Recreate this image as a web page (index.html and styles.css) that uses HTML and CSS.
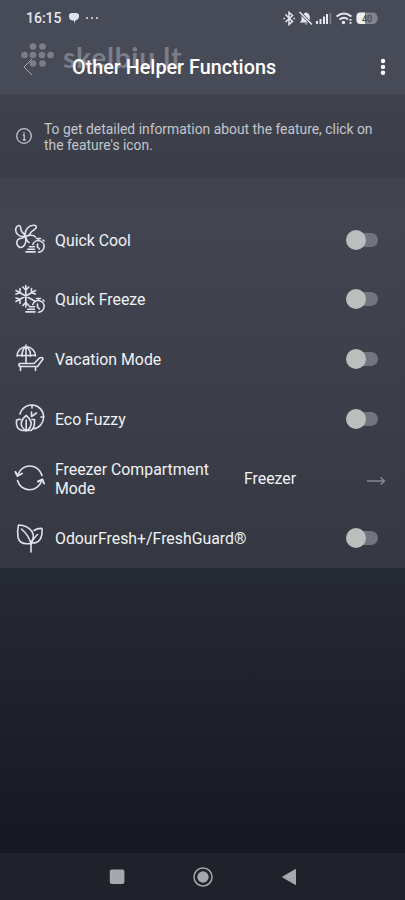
FILE: index.html
```
<!DOCTYPE html>
<html lang="en">
<head>
<meta charset="utf-8">
<meta name="viewport" content="width=device-width, initial-scale=1">
<title>Other Helper Functions</title>
<link rel="stylesheet" href="styles.css">
</head>
<body>
<svg class="defs" aria-hidden="true">
  <symbol id="timer" viewBox="0 0 32 32">
    <path d="M18.800 20.500A5.800 5.800 0 1 1 24.500 28.200M22.500 14.500h4M24.500 14.500v2M29 16l1 1M23.500 20v3l2 2M15.500 22.800h5M13.800 25.300h6.700M12 27.900h9"/>
  </symbol>
</svg>
<div class="screen">
  <header class="header">
    <div class="status">
      <span class="time">16:15</span>
      <svg class="chat" viewBox="0 0 12 12"><path d="M3.500 1h5A3 3 0 0 1 11 4.500C11 7 9 8 7.500 8.200L6 11.500V8.500H4C1.500 7.500 1 6 1 4.500A3 3 0 0 1 3.500 1z"/></svg>
      <span class="dots"><i></i><i></i><i></i></span>
      <div class="indicators">
        <svg width="98" height="16" viewBox="282 9 98 16">
          <g fill="none" stroke="#e5e8ed" stroke-width="1.500">
            <path d="M285.500 13.500l7 7-3.500 3V11.500l3.500 3-7 6.500M283.500 17.500h1.500M293.500 17.500h1.500"/>
            <path d="M299.500 11l12.500 12.500" stroke-width="1.500"/>
          </g>
          <g fill="#e5e8ed">
            <path d="M301.500 15l6.500 6.500H299.500l2-2zM303.500 13q1-1 1.800-1.200a.8.8 0 0 1 1.500 0q3 1 3 4.500v3zM304.500 22.500h3q-1.500 2-3 0z"/>
            <path d="M316 20h2v3h-2zM319.500 18h2v5h-2zM323 15.500h2v7.500h-2zM326 13h2v10h-2z"/>
            <path d="M329.500 12h1.800v11h-1.800z" opacity=".3"/>
            <circle cx="343.500" cy="21.500" r="1.700"/>
            <path d="M349.500 18h2v1.700h-2zM349.500 21h2v1.700h-2z"/>
          </g>
          <path d="M336.500 15.500q7.500-6 15 0M339.500 18.500q4.500-3.500 8.500 0" fill="none" stroke="#e5e8ed" stroke-width="1.900"/>
          <rect x="356.500" y="11.500" width="20.500" height="11.500" rx="4" fill="#80848d"/>
          <path d="M360.500 11.500H365V23H360.500a4 4 0 0 1-4-4V15.500a4 4 0 0 1 4-4z" fill="#eceeef"/>
          <path d="M377.500 15q2 2.200 0 4.500z" fill="#80848d"/>
          <text x="362" y="20.500" class="battery">40</text>
        </svg>
      </div>
    </div>
    <div class="watermark">
      <svg width="34" height="26" viewBox="20 42 34 26"><circle cx="33" cy="46.500" r="3.300"/><circle cx="42.500" cy="46.500" r="3.300"/><circle cx="24.500" cy="55" r="3.300"/><circle cx="33" cy="55" r="3.300"/><circle cx="42" cy="55" r="3.300"/><circle cx="50.500" cy="55" r="3.300"/><circle cx="33" cy="63.500" r="3.300"/><circle cx="42.500" cy="63.500" r="3.300"/></svg>
      <span>skelbiu.lt</span>
    </div>
    <div class="titlebar">
      <svg class="back" viewBox="0 0 10 18"><path d="M9 1L1 9l8 8"/></svg>
      <h1>Other Helper Functions</h1>
      <svg class="more" viewBox="0 0 6 18"><circle cx="3" cy="3" r="2.200"/><circle cx="3" cy="8.900" r="2.200"/><circle cx="3" cy="14.800" r="2.200"/></svg>
    </div>
  </header>
  <section class="info">
    <svg viewBox="0 0 18 18"><circle cx="9" cy="9" r="7.300"/><path d="M7.800 8h1.400v5M7.800 13h3M9 5v1.500"/></svg>
    <p>To get detailed information about the feature, click on<br>the feature's icon.</p>
  </section>
  <main class="list">
    <div class="row">
      <svg class="icon" viewBox="0 0 32 32"><path d="M11 12.500C10.500 5 15 1 20.500 1.300Q23.500 2 21.500 4.500C19.500 7 18 6.500 16.500 9 15 12 13 12.500 11 12.500zM11 12.500C5 13.500 .5 9 2 4Q4 .3 6 2C7.500 4 6 6 8 8 10 9.500 11 10.500 11 12.500zM11 12.500C9 15 6 13.500 4 15.500 1.500 18 3 22.500 6 23.500 10 24 13.500 18 11 12.500zM11 12.500C14.500 11 19.500 10.500 21.500 13M11 12.500C13 14.500 12.500 17.500 15 18.500"/><use href="#timer"/></svg>
      <span class="label">Quick Cool</span><span class="toggle"></span>
    </div>
    <div class="row">
      <svg class="icon" viewBox="0 0 32 32"><path d="M11.800 1.500v21.500M2 6.500l19.500 11M21.500 6.500L2 17.500M8.800 3l3 3 3-3M8.800 21.500l3-3 3 3M6 4.500v4.300L2 10M17.500 4.500v4.300l4 1.200M2 14l4 1.200v4.300"/><use href="#timer"/></svg>
      <span class="label">Quick Freeze</span><span class="toggle"></span>
    </div>
    <div class="row">
      <svg class="icon" viewBox="0 0 32 32"><path d="M3 12A9 9 0 0 1 21.500 12Q19 10.500 16.500 12 12 10.500 8 12 5.500 10.500 3 12zM12 1v18M8 12q0-7 4-9.500Q16.500 5 16.500 12M5.500 19.500H20l5.500-5.500q3-1.500 3.500 1L23.500 22.500H6q-2-1-.5-3zM6.500 23v3.500M21.500 23v3.500"/></svg>
      <span class="label">Vacation Mode</span><span class="toggle"></span>
    </div>
    <div class="row">
      <svg class="icon" viewBox="0 0 32 32"><path d="M6 11A12 12 0 1 1 19.500 25.800M18 2v3M30 14h-3M17.500 9v4.500l5-3.500M12.200 28Q6.500 24 7.300 19.500 8.500 15 12.200 12.500q4 3 5 7Q17.500 25 12.200 28zM12.200 17v11M6.500 16.500q-2.500-.5-4 .7Q1.500 26 8 27.500h4M18 16.500h2.500Q21 25 17 27.500h-4"/></svg>
      <span class="label">Eco Fuzzy</span><span class="toggle"></span>
    </div>
    <div class="row">
      <svg class="icon" viewBox="0 0 32 32"><path d="M4 11.500A12.500 12.500 0 0 1 28 12.500M27.500 18A12.500 12.500 0 0 1 3.500 17.500"/><path d="M1.500 9l2 4L8 10.500M24 18.500l4.500-2 1.500 4" stroke-width="2"/></svg>
      <span class="label mode">Freezer Compartment<br>Mode</span>
      <span class="value">Freezer</span>
      <svg class="arrow" viewBox="0 0 20 12"><path d="M1 6h17M14.500 2.500L18.500 6l-4 3.500"/></svg>
    </div>
    <div class="row">
      <svg class="icon" viewBox="0 0 32 32"><path d="M16 20.500Q6 22 4 14.500 3 8 4.500 2 14 2.500 18 8.500q3.500 6-2 12zM7.500 6q8 7 9.500 15.500V29M20 7.500q4-2.500 8-2Q28.500 12.500 26 16.500 23 20.500 17.500 20M17 22q1.500-6 6.500-10.500"/></svg>
      <span class="label">OdourFresh+/FreshGuard®</span><span class="toggle"></span>
    </div>
  </main>
  <nav class="nav">
    <svg viewBox="0 0 20 20"><rect x="2.800" y="2.500" width="14.600" height="14.500" rx="2"/></svg>
    <svg viewBox="0 0 20 20"><circle class="ring" cx="10" cy="10" r="9"/><circle cx="10" cy="10" r="5.700"/></svg>
    <svg viewBox="0 0 20 20"><path d="M3.500 10L16.500 2.500v15z" stroke="#a5a8ac" stroke-linejoin="round"/></svg>
  </nav>
</div>
</body>
</html>
```
FILE: styles.css
```
* { box-sizing: border-box; }
body { margin: 0; background: #151820; color: #f0f2f5; font-family: Roboto, sans-serif; }
.defs { position: absolute; width: 0; height: 0; }
.screen { width: 405px; height: 900px; display: flex; flex-direction: column; background: linear-gradient(#454955 0, #40434e 178px, #41444f 210px, #262a32 568px, #151820 853px); }
.header { position: relative; height: 94px; background: #474b57; }
.status { height: 36px; display: flex; align-items: center; padding: 0 25px 1px 26px; }
.time { font-size: 14px; font-weight: 500; color: #e5e8f0; }
.chat { width: 12px; height: 12px; margin-left: 6px; fill: #dce3f2; }
.dots { display: flex; gap: 3px; margin-left: 6px; }
.dots i { width: 2px; height: 2px; border-radius: 50%; background: #e0e3ea; }
.indicators { height: 16px; margin-left: auto; }
.indicators svg { display: block; }
.battery { font-size: 9px; font-weight: 500; fill: #454950; }
.watermark { position: absolute; left: 20px; top: 42px; display: flex; color: #7b7e88; fill: #7b7e88; }
.watermark span { margin: -1px 0 0 9px; font: bold 28px/32px Lato, sans-serif; letter-spacing: .8px; }
.titlebar { position: relative; height: 62px; display: flex; align-items: center; padding: 0 19px 0 23px; }
.back { width: 10px; height: 18px; fill: none; stroke: #a4a7af; stroke-width: 1; }
h1 { margin: 1px 0 0 39px; font-size: 19.800px; font-weight: 500; line-height: 24px; color: #fff; }
.more { width: 6px; height: 18px; margin-left: auto; fill: #fff; }
.info { height: 84px; display: flex; align-items: center; padding: 0 0 0 15px; background: linear-gradient(#3f424c, #3b3e49); color: #c2c5cd; }
.info svg { width: 18px; height: 18px; margin-right: 11px; fill: none; stroke: #c2c5cd; stroke-width: 1.3; }
.info p { margin: 1px 0 0; font-size: 13.870px; line-height: 16px; }
.list { height: 358px; margin-top: 32px; display: grid; grid-template-rows: repeat(6, 1fr); background: linear-gradient(#434652, #353841); }
.row { display: flex; align-items: center; padding: 1px 20px 0 14px; }
.icon { width: 32px; height: 32px; margin-right: 9px; fill: none; stroke: #e0e3ec; stroke-width: 1.6; stroke-linecap: round; stroke-linejoin: round; }
.label { font-size: 15.850px; line-height: 19px; }
.mode { width: 189px; padding-top: 1px; }
.value { font-size: 15.850px; }
.arrow { width: 20px; height: 12px; margin: 4px -1px 0 auto; fill: none; stroke: #858890; stroke-width: 1.5; }
.toggle { position: relative; width: 32px; height: 20px; margin: -1px 7px 0 auto; }
.toggle::before { content: ""; position: absolute; left: 8px; top: 3px; width: 24px; height: 14px; border-radius: 7px; background: #72757f; }
.toggle::after { content: ""; position: absolute; left: 0; top: 0; width: 20px; height: 20px; border-radius: 50%; background: #bcbdbd; }
.nav { height: 47px; margin-top: auto; display: flex; justify-content: center; align-items: center; gap: 66px; background: #1f222a; }
.nav svg { width: 20px; height: 20px; fill: #a5a8ac; }
.nav .ring { fill: none; stroke: #a5a8ac; stroke-width: 1.5; }
```
